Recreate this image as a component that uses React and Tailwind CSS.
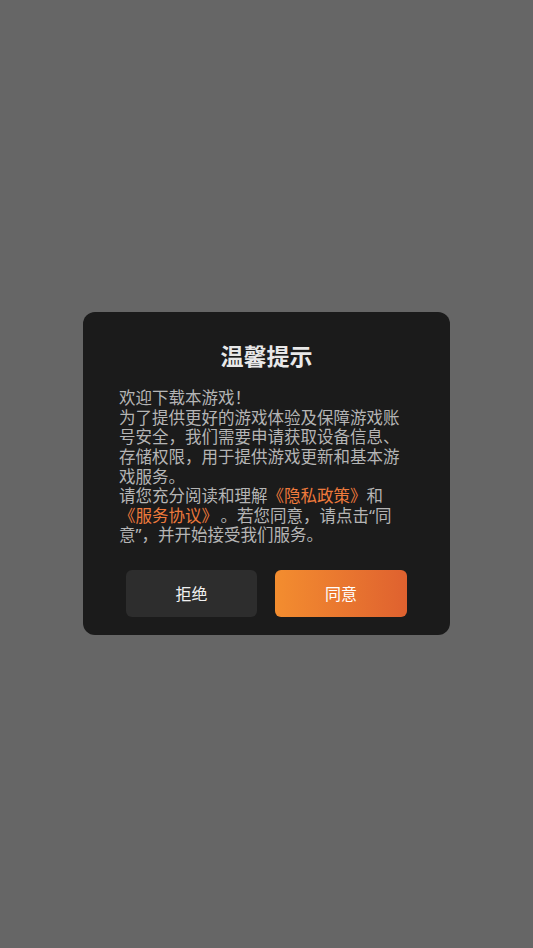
const Q = ({ children }) => (
  <span style={{ fontFamily: '"Noto Sans", sans-serif' }}>{children}</span>
)

export default function App() {
  return (
    <div
      className="min-h-screen w-full bg-[#666666] flex items-center justify-center"
      style={{ fontFamily: '"Noto Sans CJK SC", "Noto Sans", sans-serif' }}
    >
      <div className="w-[367px] rounded-[12px] bg-[#1b1b1b] pt-[28px] pb-[18px] mb-[1px]">
        <h2 className="text-center text-[23px] leading-[30px] font-bold text-[#e8e8e8]">温馨提示</h2>
        <div className="mt-[18px] px-[36px] text-[16.5px] leading-[19.6px] text-[#b5b5b5]">
          <p>欢迎下载本游戏！</p>
          <p>
            为了提供更好的游戏体验及保障游戏账号安全，我们需要申请获取设备信息、存储权限，用于提供游戏更新和基本游戏服务。
          </p>
          <p>
            请您充分阅读和理解<span className="text-[#ee7a3c]">《隐私政策》</span>和
            <span className="text-[#ee7a3c]">《服务协议》</span>
            <span className="inline-block w-[19px] text-right">。</span>若您同意，请点击<Q>“</Q>同意<Q>”</Q>，并开始接受我们服务。
          </p>
        </div>
        <div className="mt-[25px] flex justify-center gap-[18px]">
          <button className="w-[131px] h-[47px] rounded-[6px] bg-[#2d2d2d] text-[16px] text-[#f0f0f0]">拒绝</button>
          <button className="w-[132px] h-[47px] rounded-[6px] bg-gradient-to-r from-[#f38d2f] to-[#df612f] text-[16px] text-white">
            同意
          </button>
        </div>
      </div>
    </div>
  )
}
